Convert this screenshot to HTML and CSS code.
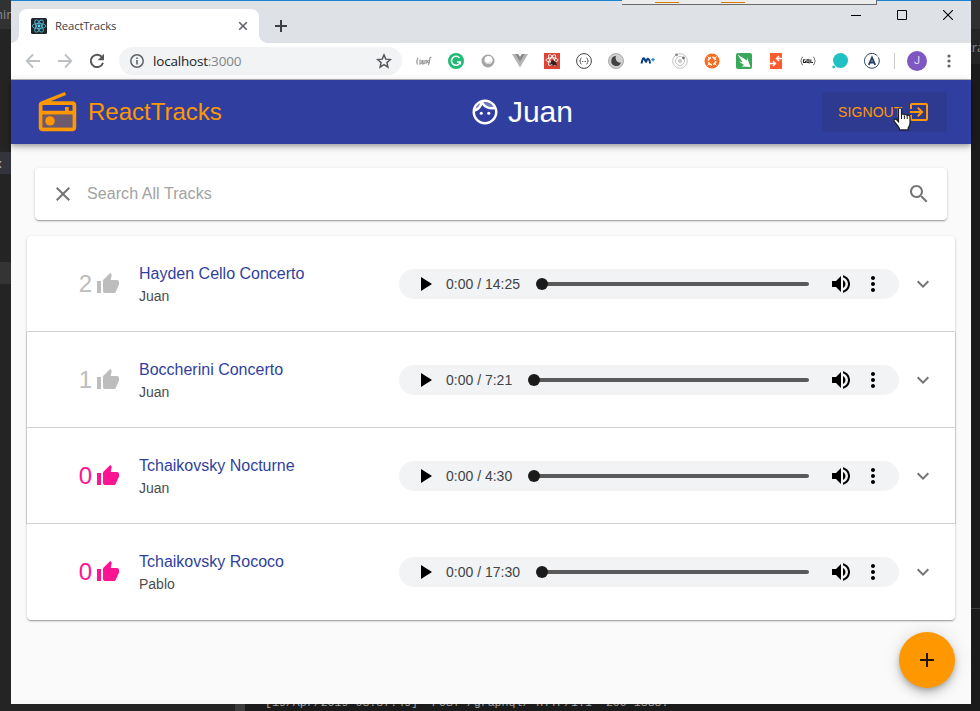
FILE: index.html
```html
<!DOCTYPE html>
<html lang="en">
<head>
<meta charset="utf-8">
<title>ReactTracks</title>
<link rel="stylesheet" href="styles.css">
</head>
<body>
<div class="desktop">
  <span class="patch patch-a">min</span>
  <span class="patch patch-b">x</span>
  <span class="patch patch-c"></span>
  <span class="patch patch-d">tra</span>
  <span class="patch patch-e"></span>
  <span class="patch patch-f"></span>
  <span class="log">[19/Apr/2019 08:37:49] "POST /graphql/ HTTP/1.1" 200 1888.</span>
</div>
<div class="window">
  <div class="tabstrip">
    <div class="tab">
      <svg class="favicon" width="16" height="16" viewBox="0 0 16 16"><rect width="16" height="16" rx="1.5" fill="#20232a"/><g fill="none" stroke="#4db6d0" stroke-width=".9"><ellipse cx="8" cy="8" rx="6.8" ry="2.6"/><ellipse cx="8" cy="8" rx="6.8" ry="2.6" transform="rotate(60 8 8)"/><ellipse cx="8" cy="8" rx="6.8" ry="2.6" transform="rotate(120 8 8)"/></g><circle cx="8" cy="8" r="1.4" fill="#61dafb"/></svg>
      <span class="tab-title">ReactTracks</span>
      <svg width="10" height="10" viewBox="0 0 10 10" stroke="#5f6368" stroke-width="1.6"><path d="M1.2 1.2l7.6 7.6M8.8 1.2L1.2 8.8"/></svg>
    </div>
    <svg class="new-tab" width="12" height="12" viewBox="0 0 12 12" stroke="#3c4043" stroke-width="2"><path d="M6 0v12M0 6h12"/></svg>
    <div class="controls">
      <svg width="10" height="10" viewBox="0 0 10 10" stroke="#000"><path d="M0 5.5h10"/></svg>
      <svg width="10" height="10" viewBox="0 0 10 10" fill="none" stroke="#000"><path d="M.5.5h9v9h-9z"/></svg>
      <svg width="10" height="10" viewBox="0 0 10 10" stroke="#000" stroke-width="1.1"><path d="M0 0l10 10M10 0L0 10"/></svg>
    </div>
  </div>
  <div class="toolbar">
    <div class="nav">
      <svg width="16" height="16" viewBox="0 0 16 16" fill="none" stroke="#bdc0c3" stroke-width="1.8"><path d="M15 8H2M8 1.5L1.7 8 8 14.500"/></svg>
      <svg width="16" height="16" viewBox="0 0 16 16" fill="none" stroke="#bdc0c3" stroke-width="1.8"><path d="M1 8h13M8 1.500L14.300 8 8 14.500"/></svg>
      <svg width="16" height="16" viewBox="0 0 16 16"><path d="M13 4.100A6.200 6.200 0 1 0 14 9.700" fill="none" stroke="#55595e" stroke-width="2"/><path d="M15 .8v6.400H8.600z" fill="#55595e"/></svg>
    </div>
    <div class="omnibox">
      <svg width="14" height="14" viewBox="0 0 14 14"><circle cx="7" cy="7" r="6.200" fill="none" stroke="#5f6368" stroke-width="1.500"/><path d="M6.200 6h1.600v4.500H6.200zM6.200 3.500h1.600v1.600H6.200z" fill="#5f6368"/></svg>
      <span class="url">localhost<i>:3000</i></span>
      <svg width="16" height="16" viewBox="0 0 24 24" fill="none" stroke="#55595e" stroke-width="2.200"><path d="M12 2.800l2.700 6.400 6.900.6-5.200 4.600 1.500 6.800-5.900-3.600-5.900 3.600 1.500-6.800-5.200-4.600 6.900-.6z"/></svg>
    </div>
    <div class="extensions">
      <svg viewBox="0 0 16 16" fill="none" stroke="#999" stroke-width="1.200"><path d="M2 5Q0 8.500 1.500 11.500M4 6.500v4.500l2-1V7M7 7v4l2-1V7M10 7l2.500 3M12.500 7L10 10.500M15.500 4.500q-2-.5-1.800 2c0 3 0 4-1.500 5.500"/></svg>
      <svg viewBox="0 0 16 16"><circle cx="8" cy="8" r="8" fill="#20b975"/><path d="M11.500 5A4.500 4.500 0 1 0 12.300 9.100H9M12.300 8.500v3" fill="none" stroke="#fff" stroke-width="1.500"/></svg>
      <svg viewBox="0 0 16 16"><circle cx="8" cy="8" r="6.500" fill="#a5a5a5"/><circle cx="8.500" cy="7" r="4" fill="#fff"/><path d="M5 9q3 3 6 0" fill="none" stroke="#ccc"/></svg>
      <svg viewBox="0 0 16 16"><path d="M0 1h6l2 3 2-3h6L8 14.500z" fill="#b5b5b5"/><path d="M3.500 1H6l2 3 2-3h2.500L8 8.800z" fill="#898989"/></svg>
      <svg viewBox="0 0 16 16"><path fill="#db4537" d="M0 0h16v16H0z"/><g fill="none" stroke="#fff" stroke-width=".9"><ellipse cx="8" cy="7" rx="6" ry="2.200"/><ellipse cx="8" cy="7" rx="6" ry="2.200" transform="rotate(60 8 7)"/><ellipse cx="8" cy="7" rx="6" ry="2.200" transform="rotate(120 8 7)"/></g><path d="M7 8l2-1 3 2 1 4-2-1-2 1-1-2-2 1z" fill="#32221f"/></svg>
      <svg viewBox="0 0 16 16" fill="none" stroke="#444"><circle cx="8" cy="8" r="7.400"/><path d="M5.500 5q-1 0-1 1.500T3.500 8q1 0 1 1.500t1 1.500M10.500 5q1 0 1 1.500t1 1.500q-1 0-1 1.500t-1 1.500M6.200 8.500h.8M7.700 8.500h.8M9.200 8.500h.8" stroke-width=".9"/></svg>
      <svg viewBox="0 0 16 16"><circle cx="8" cy="8" r="7.500" fill="#d0d0d0" stroke="#aaa"/><path d="M8 3a5 5 0 1 0 5 6.500A4.500 4.500 0 0 1 8 3" fill="#444"/></svg>
      <svg viewBox="0 0 16 16" fill="none"><path d="M1.500 10.500Q3 3.500 4.500 6T6 9.500Q7 5 8.500 6T10 10.500" stroke="#0b3e7d" stroke-width="2"/><path d="M13 5v3.400M11.300 6.700h3.400" stroke="#1e87c8" stroke-width="1.200"/></svg>
      <svg viewBox="0 0 16 16"><g fill="none" stroke="#c2c2c2"><circle cx="8" cy="8" r="7.300"/><circle cx="8" cy="8" r="4.500"/></g><circle cx="8" cy="8" r="2" fill="#c6c6c6"/><circle cx="4.500" cy="1.800" r="1.400" fill="#888"/><circle cx="11.500" cy="5" r="1.400" fill="#777"/></svg>
      <svg viewBox="0 0 16 16"><circle cx="8" cy="8" r="7.500" fill="#f76d22"/><circle cx="8" cy="8" r="3.700" fill="none" stroke="#fff" stroke-width="1.500" stroke-dasharray="4.300 1.500"/><path d="M3.500 3.500l2 2M12.500 3.500l-2 2M3.500 12.500l2-2M12.500 12.500l-2-2" stroke="#fff"/></svg>
      <svg viewBox="0 0 16 16"><rect width="16" height="16" rx="2" fill="#38a85b"/><path d="M1.500 1.500l9.500 6V4.500l3.500 9.500-9-.5 2.500-1.500L3 8.500l3.500.5z" fill="#fff"/></svg>
      <svg viewBox="0 0 16 16"><path fill="#ff5b2e" d="M2 0h12v16H2z"/><path d="M14 5.500H9M11 3L8.500 5.500 11 8M2 10.500h5M5 8l2.500 2.500L5 13" stroke="#fff" stroke-width="1.400" fill="none"/></svg>
      <svg viewBox="0 0 16 16" fill="none" stroke="#555"><path d="M3 4q-1.500 0-1.500 2T.5 8q1 0 1 2T3 12M13 4q1.500 0 1.500 2t1 2q-1 0-1 2T13 12" stroke-width=".8"/><path d="M5.500 6.800H3.500v2.700h2V8M7 6.800h2v2.700H7zM8.500 9l1 1.300M10.800 6.500v3H13" stroke="#222" stroke-width="1.100"/></svg>
      <svg viewBox="0 0 16 16" fill="#21c1c3"><circle cx="8.500" cy="7.500" r="7.500"/><circle cx="1.700" cy="14" r="1.400"/></svg>
      <svg viewBox="0 0 16 16" fill="none" stroke="#2b4260"><path d="M13.500 3A7.400 7.400 0 1 0 14.500 4.500"/><path d="M4.800 11.800L8 4.500l3.200 7.300M6 9.500h4" stroke-width="1.900"/></svg>
    </div>
    <span class="divider"></span>
    <span class="avatar">J</span>
    <svg class="menu" width="4" height="14" viewBox="0 0 4 14" fill="#5f6368"><circle cx="2" cy="2" r="1.600"/><circle cx="2" cy="7" r="1.600"/><circle cx="2" cy="12" r="1.600"/></svg>
  </div>

  <div class="app">
    <header class="appbar">
      <div class="brand">
        <svg width="45" height="45" viewBox="0 0 24 24" fill="#ff9800"><path opacity=".3" d="M4 20h16v-7H4z"/><path d="M3.240 6.150C2.510 6.430 2 7.170 2 8v12c0 1.100.9 2 2 2h16c1.110 0 2-.9 2-2V8c0-1.110-.89-2-2-2H8.300l8.260-3.340L15.880 1 3.240 6.150zM20 20H4v-7h16v7zm0-9h-2V9h-2v2H4V8h16v3z"/><circle cx="8" cy="16.480" r="2.500"/></svg>
        <span>ReactTracks</span>
      </div>
      <div class="user">
        <svg width="30" height="30" viewBox="0 0 24 24" fill="#fff"><path opacity=".3" d="M17.500 8c.46 0 .91-.05 1.340-.12C17.440 5.560 14.900 4 12 4c-.46 0-.91.05-1.340.12C12.060 6.440 14.600 8 17.500 8zM8.080 5.030C6.370 6 5.050 7.580 4.420 9.470c1.710-.97 3.030-2.550 3.660-4.440z"/><path d="M12 2C6.480 2 2 6.480 2 12s4.480 10 10 10 10-4.480 10-10S17.520 2 12 2zm0 2c2.900 0 5.440 1.560 6.840 3.880-.43.070-.88.120-1.340.12-2.900 0-5.440-1.560-6.840-3.880.43-.07.88-.12 1.340-.12zM8.080 5.030C7.450 6.920 6.130 8.500 4.420 9.470 5.050 7.580 6.370 6 8.080 5.030zM12 20c-4.410 0-8-3.590-8-8 0-.05.010-.1.010-.15 2.600-.98 4.680-2.990 5.740-5.550 1.830 2.260 4.620 3.700 7.750 3.700.75 0 1.470-.09 2.170-.24.210.71.330 1.460.330 2.240 0 4.410-3.590 8-8 8z"/><circle cx="9" cy="13" r="1.250"/><circle cx="15" cy="13" r="1.250"/></svg>
        <span>Juan</span>
      </div>
      <div class="signout">
        <span>SIGNOUT</span>
        <svg width="24" height="24" viewBox="0 0 24 24" fill="#ff9800"><path d="M10.090 15.590L11.500 17l5-5-5-5-1.410 1.410L12.670 11H3v2h9.670l-2.580 2.590zM19 3H5c-1.110 0-2 .9-2 2v4h2V5h14v14H5v-4H3v4c0 1.100.89 2 2 2h14c1.100 0 2-.9 2-2V5c0-1.100-.9-2-2-2z"/></svg>
      </div>
    </header>
    <div class="search">
      <svg width="24" height="24" viewBox="0 0 24 24" fill="#757575"><path d="M19 6.410L17.590 5 12 10.590 6.410 5 5 6.410 10.590 12 5 17.590 6.410 19 12 13.410 17.590 19 19 17.590 13.410 12z"/></svg>
      <span>Search All Tracks</span>
      <svg width="24" height="24" viewBox="0 0 24 24" fill="#757575"><path d="M15.500 14h-.79l-.28-.27C15.410 12.590 16 11.110 16 9.500 16 5.910 13.090 3 9.500 3S3 5.910 3 9.500 5.910 16 9.500 16c1.610 0 3.090-.59 4.230-1.570l.27.280v.79l5 4.990L20.490 19l-4.990-5zm-6 0C7.010 14 5 11.990 5 9.500S7.010 5 9.500 5 14 7.010 14 9.500 11.990 14 9.500 14z"/></svg>
    </div>
    <div class="tracks">
      <div class="track">
        <div class="likes"><span>2</span><svg width="24" height="24" viewBox="0 0 24 24"><use href="#thumb"/></svg></div>
        <div class="info"><span class="title">Hayden Cello Concerto</span><span class="artist">Juan</span></div>
        <div class="player"><svg class="play" width="12" height="14" viewBox="0 0 12 14"><path d="M0 0v14L11 7z"/></svg><span class="time">0:00 / 14:25</span><span class="bar"></span><svg class="vol" width="24" height="24" viewBox="0 0 24 24"><use href="#volume"/></svg><svg class="more" width="24" height="24" viewBox="0 0 24 24"><use href="#dots"/></svg></div>
        <svg class="chev" width="24" height="24" viewBox="0 0 24 24"><use href="#chevron"/></svg>
      </div>
      <div class="track raised">
        <div class="likes"><span>1</span><svg width="24" height="24" viewBox="0 0 24 24"><use href="#thumb"/></svg></div>
        <div class="info"><span class="title">Boccherini Concerto</span><span class="artist">Juan</span></div>
        <div class="player"><svg class="play" width="12" height="14" viewBox="0 0 12 14"><path d="M0 0v14L11 7z"/></svg><span class="time">0:00 / 7:21</span><span class="bar"></span><svg class="vol" width="24" height="24" viewBox="0 0 24 24"><use href="#volume"/></svg><svg class="more" width="24" height="24" viewBox="0 0 24 24"><use href="#dots"/></svg></div>
        <svg class="chev" width="24" height="24" viewBox="0 0 24 24"><use href="#chevron"/></svg>
      </div>
      <div class="track raised">
        <div class="likes own"><span>0</span><svg width="24" height="24" viewBox="0 0 24 24"><use href="#thumb"/></svg></div>
        <div class="info"><span class="title">Tchaikovsky Nocturne</span><span class="artist">Juan</span></div>
        <div class="player"><svg class="play" width="12" height="14" viewBox="0 0 12 14"><path d="M0 0v14L11 7z"/></svg><span class="time">0:00 / 4:30</span><span class="bar"></span><svg class="vol" width="24" height="24" viewBox="0 0 24 24"><use href="#volume"/></svg><svg class="more" width="24" height="24" viewBox="0 0 24 24"><use href="#dots"/></svg></div>
        <svg class="chev" width="24" height="24" viewBox="0 0 24 24"><use href="#chevron"/></svg>
      </div>
      <div class="track">
        <div class="likes own"><span>0</span><svg width="24" height="24" viewBox="0 0 24 24"><use href="#thumb"/></svg></div>
        <div class="info"><span class="title">Tchaikovsky Rococo</span><span class="artist">Pablo</span></div>
        <div class="player"><svg class="play" width="12" height="14" viewBox="0 0 12 14"><path d="M0 0v14L11 7z"/></svg><span class="time">0:00 / 17:30</span><span class="bar"></span><svg class="vol" width="24" height="24" viewBox="0 0 24 24"><use href="#volume"/></svg><svg class="more" width="24" height="24" viewBox="0 0 24 24"><use href="#dots"/></svg></div>
        <svg class="chev" width="24" height="24" viewBox="0 0 24 24"><use href="#chevron"/></svg>
      </div>
    </div>
    <div class="fab"><svg width="24" height="24" viewBox="0 0 24 24" fill="#211400"><path d="M19 13h-6v6h-2v-6H5v-2h6V5h2v6h6v2z"/></svg></div>
  </div>
</div>
<div class="overlap"><i></i><i></i></div>
<svg class="cursor" width="20" height="25" viewBox="0 0 20 25"><path d="M5.500 2.500Q5.500 1 7 1t1.500 1.500V8q.2-1 1.400-1t1.500 1.300q.2-.8 1.300-.8t1.500 1.300q.3-.7 1.200-.7 1.600 0 1.600 1.900v6q0 2-1.100 3.700-.9 1.300-.9 3.200H6.500q0-2-1.500-3.800L1.200 14.500Q.5 13 1.600 12.300t2.400.7l1.500 1.700z" fill="#fff" stroke="#1b1b1b" stroke-width="1.200"/><path d="M8.500 8v4M11.400 9v3M14.200 9.500V12" stroke="#1b1b1b" stroke-width="1"/></svg>
<svg class="defs" width="0" height="0">
  <defs>
    <path id="thumb" d="M1 21h4V9H1v12zm22-11c0-1.100-.9-2-2-2h-6.310l.95-4.570.030-.32c0-.41-.17-.79-.44-1.060L14.170 1 7.590 7.590C7.220 7.950 7 8.450 7 9v10c0 1.100.9 2 2 2h9c.83 0 1.540-.5 1.840-1.220l3.020-7.050c.09-.23.14-.47.14-.73v-2z"/>
    <path id="volume" d="M3 9v6h4l5 5V4L7 9H3zm13.500 3c0-1.770-1.020-3.290-2.500-4.030v8.050c1.480-.73 2.500-2.250 2.500-4.020zM14 3.230v2.060c2.890.86 5 3.540 5 6.710s-2.110 5.850-5 6.710v2.060c4.010-.91 7-4.490 7-8.770s-2.990-7.860-7-8.770z"/>
    <path id="dots" d="M12 8c1.100 0 2-.9 2-2s-.9-2-2-2-2 .9-2 2 .9 2 2 2zm0 2c-1.100 0-2 .9-2 2s.9 2 2 2 2-.9 2-2-.9-2-2-2zm0 6c-1.100 0-2 .9-2 2s.9 2 2 2 2-.9 2-2-.9-2-2-2z"/>
    <path id="chevron" d="M16.590 8.590L12 13.170 7.410 8.590 6 10l6 6 6-6z"/>
  </defs>
</svg>
</body>
</html>
```
FILE: styles.css
```css
* { box-sizing: border-box; }
html, body { margin: 0; height: 711px; overflow: hidden; }
body {
  position: relative;
  width: 980px;
  background: #1c1c1c;
  font-family: "Liberation Sans", Arial, sans-serif;
}
svg { display: block; flex: none; }
.defs { position: absolute; }

/* desktop visible around the window */
.desktop { position: absolute; inset: 0; background: linear-gradient(90deg, #242424 240px, #1b1b1b 240px); overflow: hidden; }
.patch { position: absolute; color: #8d8d8d; font: 13px/28px "Open Sans", sans-serif; overflow: hidden; }
.patch-a { left: 0; top: 0; width: 11px; height: 29px; background: #323232; text-indent: -9px; }
.patch-b { left: 0; top: 152px; width: 11px; height: 22px; line-height: 22px; background: #34343c; text-indent: -5px; color: #bbb; }
.patch-c { left: 0; top: 262px; width: 11px; height: 22px; background: #343434; }
.patch-d { left: 971px; top: 0; width: 9px; height: 64px; background: linear-gradient(#303030 29px, #252525 29px); line-height: 94px; text-indent: -4px; }
.patch-e { left: 235px; top: 704px; width: 10px; height: 7px; background: #3c3c3c; }
.patch-f { left: 971px; top: 608px; width: 9px; height: 1px; background: #3c3c3c; }
.log { position: absolute; left: 265px; top: 696px; white-space: pre; font: 11.600px/14px "Liberation Mono", monospace; color: #a4a4a4; }

.window {
  position: relative;
  margin-left: 11px;
  width: 960px;
  height: 704px;
  background: #fafafa;
  border-top: 1px solid #1a82d4;
  display: flex;
  flex-direction: column;
}

/* browser chrome */
.tabstrip { height: 42px; flex: none; background: #dee1e6; display: flex; align-items: flex-end; padding-left: 8px; }
.tab {
  position: relative;
  width: 240px;
  height: 34px;
  background: #fff;
  border-radius: 8px 8px 0 0;
  display: flex;
  align-items: center;
  padding: 0 11px 0 12px;
}
.tab::before, .tab::after { content: ""; position: absolute; bottom: 0; width: 8px; height: 8px; }
.tab::before { left: -8px; background: radial-gradient(circle at 0 0, #dee1e6 7.500px, #fff 8px); }
.tab::after { right: -8px; background: radial-gradient(circle at 100% 0, #dee1e6 7.500px, #fff 8px); }
.tab-title { flex: 1; margin-left: 8px; font: 11.300px/16px "Open Sans", sans-serif; letter-spacing: -.15px; color: #3c4043; }
.new-tab { margin: 0 0 11px 16px; }
.controls { margin: 0 18px 23px auto; display: flex; gap: 36px; }
.toolbar { height: 37px; flex: none; background: #fff; border-bottom: 1px solid #b6b4b6; display: flex; align-items: center; padding-left: 14px; }
.nav { display: flex; gap: 16px; }
.omnibox { width: 283px; height: 28px; margin-left: 14px; padding: 0 10px 0 11px; border-radius: 14px; background: #f1f3f4; display: flex; align-items: center; }
.url { flex: 1; margin-left: 9px; font: 13.500px/20px "Open Sans", sans-serif; letter-spacing: -.2px; color: #202124; }
.url i { font-style: normal; color: #80868b; }
.extensions { display: flex; gap: 16px; margin-left: 14px; }
.extensions svg { width: 16px; height: 16px; }
.divider { width: 1px; height: 16px; margin-left: 14px; background: #c8cacd; }
.avatar { width: 20px; height: 20px; margin-left: 12px; border-radius: 50%; background: #7e57c2; color: #e8def5; font: 11px/20px Roboto, sans-serif; text-align: center; }
.menu { margin-left: 20px; }

/* application */
.app { flex: 1; position: relative; }
.appbar {
  height: 64px;
  padding: 0 24px;
  background: #303f9f;
  display: flex;
  justify-content: space-between;
  align-items: center;
  box-shadow: 0 2px 4px -1px rgba(0, 0, 0, .2), 0 4px 5px rgba(0, 0, 0, .14), 0 1px 10px rgba(0, 0, 0, .12);
}
.brand { display: flex; align-items: center; color: #ff9800; font-size: 24px; line-height: 32px; gap: 8px; }
.user { display: flex; align-items: center; color: #fff; font-size: 30px; line-height: 40px; gap: 8px; margin-right: 1px; }
.signout {
  width: 125px;
  height: 40px;
  padding: 0 16px;
  border-radius: 4px;
  background: #2d3a90;
  color: #ff9800;
  font-size: 14px;
  letter-spacing: .1px;
  display: flex;
  align-items: center;
  justify-content: space-between;
}
.search {
  margin: 24px 24px 0;
  height: 52px;
  padding: 0 16px;
  border-radius: 4px;
  background: #fff;
  display: flex;
  align-items: center;
  gap: 12px;
  box-shadow: 0 1px 3px rgba(0, 0, 0, .2), 0 1px 1px rgba(0, 0, 0, .14), 0 2px 1px -1px rgba(0, 0, 0, .12);
}
.search span { flex: 1; font-size: 16px; letter-spacing: .07px; color: #a2a2a2; }
.tracks { margin: 16px 16px 0; border-radius: 4px; background: #fff; box-shadow: 0 1px 3px rgba(0, 0, 0, .2), 0 1px 1px rgba(0, 0, 0, .14), 0 2px 1px -1px rgba(0, 0, 0, .12); }
.track { height: 96px; display: flex; align-items: center; border-bottom: 1px solid #d0d0d0; padding-top: 1px; }
.track:last-child { border-bottom: 0; padding-bottom: 1px; }
.raised { box-shadow: -1px 0 #c9c9c9, 1px 0 #c9c9c9; }
.likes { width: 93px; display: flex; align-items: center; justify-content: flex-end; gap: 4px; color: #bdbdbd; font-size: 24px; line-height: 32px; }
.likes svg { fill: currentColor; }
.own { color: #ff1493; }
.info { width: 260px; margin-left: 19px; display: flex; flex-direction: column; }
.title { font-size: 16px; line-height: 24px; color: #303f9f; }
.artist { font-size: 14px; line-height: 21px; color: #4c4c4c; }
.player { width: 500px; height: 30px; border-radius: 15px; background: #f1f3f4; display: flex; align-items: center; padding: 0 14px 0 22px; }
.time { margin-left: 13px; font-size: 14px; color: #424344; white-space: pre; }
.bar { flex: 1; height: 4px; margin-left: 22px; border-radius: 2px; background: #5a5a5a; position: relative; }
.bar::before { content: ""; position: absolute; left: -6px; top: -4px; width: 12px; height: 12px; border-radius: 50%; background: #1b1b1b; }
.vol { margin-left: 20px; }
.more { margin-left: 8px; }
.chev { margin-left: 12px; fill: #757575; }
.fab {
  position: absolute;
  right: 16px;
  bottom: 16px;
  width: 56px;
  height: 56px;
  border-radius: 50%;
  background: #ff9800;
  display: grid;
  place-items: center;
  box-shadow: 0 3px 5px -1px rgba(0, 0, 0, .2), 0 6px 10px rgba(0, 0, 0, .14), 0 1px 18px rgba(0, 0, 0, .12);
}

/* edge of another window and the pointer */
.overlap { position: absolute; left: 622px; top: 0; width: 255px; height: 5px; background: #ececec; border: solid #6b6b6b; border-width: 0 1px 1px 0; }
.overlap i { position: absolute; top: 2px; left: 33px; width: 24px; height: 1px; background: #d87900; }
.overlap i + i { left: 99px; }
.cursor { position: absolute; left: 893px; top: 107px; }
```
